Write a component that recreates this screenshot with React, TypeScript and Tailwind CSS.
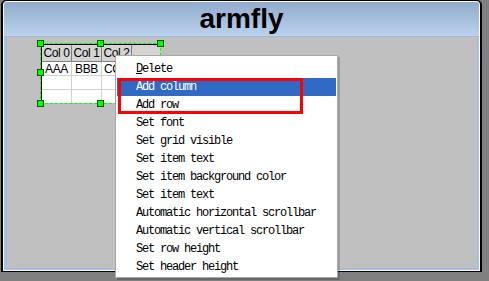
import React from 'react';

const menuItems = [
  'Delete',
  'Add column',
  'Add row',
  'Set font',
  'Set grid visible',
  'Set item text',
  'Set item background color',
  'Set item text',
  'Automatic horizontal scrollbar',
  'Automatic vertical scrollbar',
  'Set row height',
  'Set header height',
];

const columns = ['Col 0', 'Col 1', 'Col 2'];
const rows = [['AAA', 'BBB', 'CCC'], ['', '', ''], ['', '', '']];

// selection handles, top-left corner in client coordinates
const handles = [
  { left: 'left-[30px]', top: 'top-[3px]' },
  { left: 'left-[90px]', top: 'top-[3px]' },
  { left: 'left-[150px]', top: 'top-[3px]' },
  { left: 'left-[30px]', top: 'top-[32px]' },
  { left: 'left-[30px]', top: 'top-[63px]' },
  { left: 'left-[90px]', top: 'top-[63px]' },
];

const ListView = () => (
  <div className="absolute left-[34px] top-[7px] w-[120px] h-[59px] bg-white border-t border-l border-black flex flex-col overflow-hidden font-['Liberation_Sans',Arial,sans-serif] text-[12px] tracking-[-0.4px] text-black">
    <div className="flex h-[17px] shrink-0">
      {columns.map((c) => (
        <div key={c} className="w-[30px] shrink-0 bg-[#d4d4d4] border-r border-b border-[#808080] flex items-center justify-center leading-none">
          {c}
        </div>
      ))}
      <div className="flex-1 bg-[#d4d4d4] border-b border-[#808080]" />
    </div>
    {rows.map((r, i) => (
      <div key={i} className="flex h-[14px] shrink-0 border-b border-[#d0d0d0]">
        {r.map((cell, j) => (
          <div key={j} className="w-[30px] shrink-0 border-r border-[#d0d0d0] flex items-center justify-center leading-none">
            {cell}
          </div>
        ))}
        <div className="flex-1" />
      </div>
    ))}
  </div>
);

const ContextMenu = () => (
  <div className="absolute left-[115px] top-[55px] w-[223px] h-[223px] bg-white border border-[#a8a8a0] shadow-[2px_2px_0_rgba(0,0,0,0.18)] pt-[4px] px-px font-['Liberation_Mono','Courier_New',monospace] text-[12px] tracking-[-1.2px] text-black">
    {menuItems.map((item, i) => (
      <div
        key={i}
        className={`h-[18px] leading-[18px] pl-[19px] whitespace-pre ${i === 1 ? 'bg-[#316ac5] text-white' : ''}`}
      >
        {i === 0 ? (
          <>
            <span className="underline">D</span>elete
          </>
        ) : (
          item
        )}
      </div>
    ))}
  </div>
);

export default function App() {
  return (
    <div className="relative w-[489px] h-[281px] bg-[#808080] overflow-hidden">
      <div className="ml-px w-[481px] h-[272px] border-black border-t border-b border-l-2 border-r-2 rounded-t-[5px]">
        <div className="h-full border border-white rounded-t-[4px] bg-[#a4bfdf] flex flex-col">
          <div className="h-[35px] shrink-0 border-b border-[#9fb9da] bg-gradient-to-b from-[#92abcd] to-[#bad2ec] rounded-t-[3px] flex items-center justify-center">
            <span className="font-['Liberation_Sans',Arial,sans-serif] font-bold text-[28px] text-black">armfly</span>
          </div>
          <div className="relative flex-1 ml-[3px] mr-[2px] mb-[2px] bg-[#c0c0c0]">
            <ListView />
            <div className="absolute left-[33px] top-[6px] w-[121px] h-[61px] border border-dashed border-[#00ff00]" />
            {handles.map((h, i) => (
              <div key={i} className={`absolute ${h.left} ${h.top} w-[7px] h-[7px] bg-[#00ff00] border border-[#0a5a0a]`} />
            ))}
          </div>
        </div>
      </div>
      <ContextMenu />
      <div className="absolute left-[118px] top-[78px] w-[185px] h-[36px] border-[3px] border-[#ff0000]" />
    </div>
  );
}
